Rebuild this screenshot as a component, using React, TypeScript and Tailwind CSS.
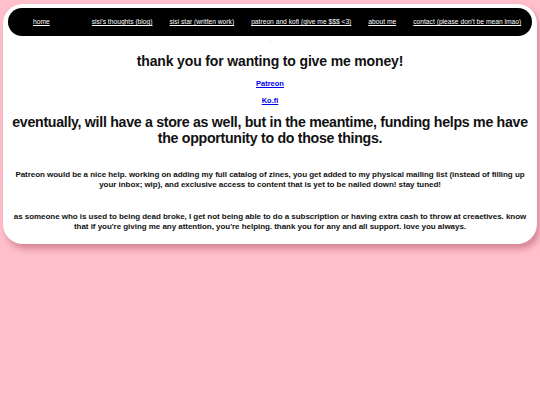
const NAV = [
  'home',
  "sisi's thoughts (blog)",
  'sisi star (written work)',
  'patreon and kofi (give me $$$ <3)',
  'about me',
  "contact (please don't be mean lmao)",
];

export default function App() {
  return (
    <div
      className="min-h-[405px] w-full bg-[#ffc0cb] pt-[4px] px-[3px]"
      style={{ fontFamily: '"Liberation Sans", Arial, sans-serif' }}
    >
      <div className="bg-white rounded-[20px] pt-[4px] px-[5px] pb-[12px] shadow-[3px_5px_6px_rgba(180,90,110,0.55)]">
        {/* nav bar */}
        <nav className="bg-black rounded-full h-[28px] flex items-center pl-[25px] text-white text-[6.7px]">
          {NAV.map((n, i) => (
            <a key={n} href="#" className={`text-white underline whitespace-nowrap ${i === 0 ? 'mr-[42px]' : 'mr-[17px]'}`}>
              {n}
            </a>
          ))}
        </nav>
        <p className="text-center text-[6px] leading-[6px] text-gray-400 mt-[2px]">:</p>

        <h1 className="text-center font-bold text-[14px] leading-[18px] tracking-[-0.15px] text-[#111] mt-[8px]">
          thank you for wanting to give me money!
        </h1>
        <div className="flex flex-col items-center gap-[7px] mt-[9px] text-[7.5px] leading-[10px] font-bold">
          <a href="#" className="text-[#0000ee] underline">Patreon</a>
          <a href="#" className="text-[#0000ee] underline">Ko.fi</a>
        </div>
        <h2 className="text-center font-bold text-[14.2px] leading-[16px] tracking-[-0.3px] text-[#111] mt-[8px] whitespace-nowrap">
          eventually, will have a store as well, but in the meantime, funding helps me have
          <br />
          the opportunity to do those things.
        </h2>

        <p className="text-center font-bold text-[8px] leading-[10px] tracking-[-0.04px] text-[#111] mt-[24px] whitespace-nowrap">
          Patreon would be a nice help. working on adding my full catalog of zines, you get added to my physical
          mailing list (instead of filling up
          <br />
          your inbox; wip), and exclusive access to content that is yet to be nailed down! stay tuned!
        </p>
        <p className="text-center font-bold text-[8px] leading-[10px] tracking-[-0.04px] text-[#111] mt-[22px] whitespace-nowrap">
          as someone who is used to being dead broke, I get not being able to do a subscription or having extra cash
          to throw at creaetives. know
          <br />
          that if you're giving me any attention, you're helping. thank you for any and all support. love you always.
        </p>
      </div>
    </div>
  );
}
